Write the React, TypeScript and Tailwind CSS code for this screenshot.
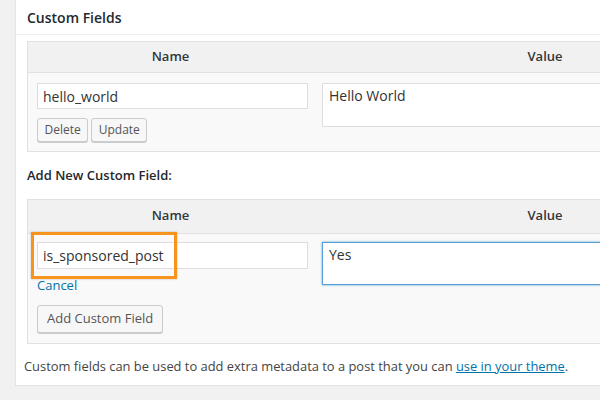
import React from "react";

const font = { fontFamily: '"Open Sans", "Noto Sans", sans-serif' };

function Btn({ children, big }: { children: React.ReactNode; big?: boolean }) {
  return (
    <button
      className={
        big
          ? "h-[28px] px-[9px] text-[13px] text-[#555] bg-[#f7f7f7] border border-[#cccccc] rounded-[3px] shadow-[0_1px_0_#cccccc] leading-none"
          : "h-[24px] px-[6.5px] text-[12px] text-[#555] bg-[#f7f7f7] border border-[#cccccc] rounded-[3px] shadow-[0_1px_0_#cccccc] leading-none"
      }
    >
      {children}
    </button>
  );
}

function HeaderRow({ h }: { h: string }) {
  return (
    <div className={`flex ${h} bg-[#f1f1f1] border-b border-[#e1e1e1] text-[13px] font-semibold text-[#32373c]`}>
      <div className="w-[285px] flex items-center justify-center">Name</div>
      <div className="w-[464px] flex items-center justify-center">Value</div>
    </div>
  );
}

export default function App() {
  return (
    <div className="w-[600px] h-[400px] bg-[#f1f1f1] overflow-hidden pl-[15px]" style={font}>
      <div className="w-[800px] h-[385px] bg-white border-l border-[#e5e5e5] shadow-[0_1px_1px_rgba(0,0,0,0.06)] text-[#444]">
        <div className="h-[35px] border-b border-[#eeeeee] pl-[11px] flex items-center text-[14px] font-semibold text-[#23282d]">
          Custom Fields
        </div>
        <div className="pl-[11px] pt-[6px]">
          {/* Table 1 */}
          <div className="w-[751px] border border-[#e1e1e1]">
            <HeaderRow h="h-[31px]" />
            <div className="flex bg-[#f9f9f9] pt-[10px] pb-[9px]">
              <div className="w-[285px] pl-[9px] pr-[5px] flex flex-col">
                <input
                  readOnly
                  value="hello_world"
                  className="h-[26px] w-[271px] border border-[#dddddd] bg-white px-[5px] text-[14px] text-[#333] outline-none"
                  style={font}
                />
                <div className="flex gap-[3px] mt-[9px]">
                  <Btn>Delete</Btn>
                  <Btn>Update</Btn>
                </div>
              </div>
              <div className="pl-[9px]">
                <div className="h-[44px] w-[440px] border border-[#dddddd] bg-white px-[6px] pt-[1px] text-[14px] text-[#333]">
                  Hello World
                </div>
              </div>
            </div>
          </div>

          <div className="mt-[14px] text-[13px] font-semibold text-[#23282d]">Add New Custom Field:</div>

          {/* Table 2 */}
          <div className="mt-[13px] w-[751px] border border-[#e1e1e1]">
            <HeaderRow h="h-[34px]" />
            <div className="flex bg-[#f9f9f9] pt-[8px] pb-[10px]">
              <div className="w-[285px] pl-[9px] pr-[5px] flex flex-col">
                <div className="relative">
                  <input
                    readOnly
                    value="is_sponsored_post"
                    className="h-[27px] w-[271px] border border-[#dddddd] bg-white px-[5px] text-[14px] text-[#333] outline-none"
                    style={font}
                  />
                  <div className="absolute left-[-6px] top-[-10px] w-[146px] h-[47px] border-[3px] border-[#f7941d] shadow-[0_0_2px_rgba(0,0,0,0.25)]" />
                </div>
                <div className="mt-[8px] text-[13px] leading-[16px] text-[#0073aa]">Cancel</div>
                <div className="mt-[12px]">
                  <Btn big>Add Custom Field</Btn>
                </div>
              </div>
              <div className="pl-[9px]">
                <div className="h-[43px] w-[440px] border border-[#5b9dd9] shadow-[0_0_2px_rgba(30,140,190,0.8)] bg-white px-[6px] pt-[1px] text-[14px] text-[#333]">
                  Yes
                </div>
              </div>
            </div>
          </div>

          <div className="mt-[13px] -ml-[3px] text-[12.9px] text-[#444]">
            Custom fields can be used to add extra metadata to a post that you can{" "}
            <span className="text-[#0073aa] underline">use in your theme</span>.
          </div>
        </div>
      </div>
    </div>
  );
}
